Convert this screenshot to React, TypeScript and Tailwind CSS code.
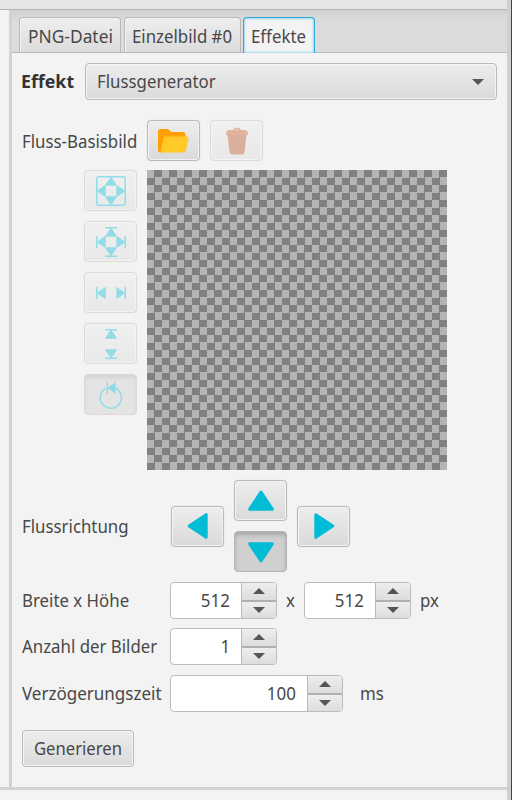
import React from "react";

const raised = "border border-[#b9b9b9] bg-linear-to-b from-[#ededed] to-[#dadada] shadow-[inset_0_0_0_1px_#f4f4f4]";

function Label({ children, className = "", fit = "scale-x-[.935]" }: { children: React.ReactNode; className?: string; fit?: string }) {
  return (
    <span className={`block origin-left whitespace-nowrap text-[18px] leading-6 ${fit} ${className}`}>
      {children}
    </span>
  );
}

function IconButton({ children, pressed, disabled }: { children: React.ReactNode; pressed?: boolean; disabled?: boolean }) {
  const skin = pressed
    ? "border border-[#b4b4b4] bg-[#d0d0d0] shadow-[inset_0_3px_4px_#a8a8a8]"
    : "border border-[#b9b9b9] bg-linear-to-b from-[#ededed] to-[#dadada] shadow-[inset_0_0_0_1px_#f4f4f4,0_0_1px_#c0c0c0]";
  return (
    <button className={`flex h-[41px] w-[53px] shrink-0 items-center justify-center rounded-[4px] ${skin} ${disabled ? "opacity-40" : ""}`}>
      {children}
    </button>
  );
}

const up = "M15 .5L21.3 9.7H8.7Z";
const down = "M15 29.5L21.3 20.3H8.7Z";
const left = "M.5 15L9.7 8.7V21.3Z";
const right = "M29.5 15L20.3 8.7V21.3Z";

function Glyph({ d, lines }: { d: string; lines: string }) {
  return (
    <svg width="30" height="30" viewBox="0 0 30 30">
      <path d={d} fill="#00bcd4" />
      <path d={lines} fill="none" stroke="#00bcd4" strokeWidth="1.5" />
    </svg>
  );
}

function Triangle({ turn }: { turn: string }) {
  return (
    <svg width="28" height="28" viewBox="0 0 28 28" className={turn}>
      <path d="M14 5.2L25.3 22.2H2.7Z" fill="#00bcd4" stroke="#00bcd4" strokeWidth="3" strokeLinejoin="round" />
    </svg>
  );
}

function Spinner({ value, field }: { value: string; field: string }) {
  return (
    <div className="flex h-[37px] shrink-0 overflow-hidden rounded-[4px] border border-[#bcbcbc] bg-white">
      <div className={`flex items-center justify-end pr-[11px] pb-[2px] ${field}`}>
        <span className="block origin-right scale-x-[.94] text-[18px] leading-6">{value}</span>
      </div>
      <div className="flex w-[35px] flex-col border-l border-[#b9b9b9]">
        <div className="flex flex-1 items-center justify-center border-b border-[#b0b0b0] bg-linear-to-b from-[#eeeeee] to-[#dddddd]">
          <svg width="12" height="6"><path d="M6 0L12 6H0Z" fill="#555" /></svg>
        </div>
        <div className="flex flex-1 items-center justify-center border-t border-[#b0b0b0] bg-linear-to-b from-[#eeeeee] to-[#dddddd]">
          <svg width="12" height="6"><path d="M6 6L12 0H0Z" fill="#555" /></svg>
        </div>
      </div>
    </div>
  );
}

function Tab({ children, className, fit }: { children: React.ReactNode; className: string; fit?: string }) {
  return (
    <div className={`shrink-0 rounded-t-[4px] border border-b-0 pt-[6px] ${className}`}>
      <Label fit={fit}>{children}</Label>
    </div>
  );
}

export default function App() {
  return (
    <div className="flex h-[800px] w-[512px] overflow-hidden bg-[#f3f3f3] font-['Noto_Sans','Open_Sans',sans-serif] text-[#484848]">
      <div className="flex w-[507px] flex-col">
        <div className="h-[10px] shrink-0 border-b border-[#b5b5b5] bg-[#e6e6e6]" />
        <div className="flex h-[777px] shrink-0">
          <div className="w-[12px] shrink-0 border-r-[3px] border-[#d2d2d2]" />
          <div className="min-w-0 flex-1">
            <div className="flex h-[43px] items-end border-b border-[#b8b8b8] bg-linear-to-b from-[#cfcfcf] to-[#dcdcdc] to-25% pl-[7px]">
              <Tab fit="scale-x-[.965]" className="mr-[3px] h-[35px] w-[102px] border-[#b9b9b9] bg-linear-to-b from-[#eeeeee] to-[#dcdcdc] pl-2 shadow-[inset_1px_1px_0_#f4f4f4]">PNG-Datei</Tab>
              <Tab className="mr-[2px] h-[35px] w-[117px] border-[#b9b9b9] bg-linear-to-b from-[#eeeeee] to-[#dcdcdc] pl-[7px] shadow-[inset_1px_1px_0_#f4f4f4]">Einzelbild #0</Tab>
              <Tab className="-mb-px h-[36px] w-[72px] border-[#2fadd8] bg-[#f3f3f3] pl-[7px] shadow-[inset_0_0_2px_1px_#9bd8ee]">Effekte</Tab>
            </div>

            <div className="mt-[10px] flex h-[37px] items-center pl-[9px]">
              <div className="w-[64px] pb-[2px]"><Label fit="scale-x-[.99]" className="font-bold text-[#333]">Effekt</Label></div>
              <div className={`flex h-[37px] w-[412px] items-center justify-between rounded-[4px] pr-[12px] pl-[11px] ${raised}`}>
                <Label className="pb-px">Flussgenerator</Label>
                <svg width="12" height="6"><path d="M0 0H12L6 6Z" fill="#555" /></svg>
              </div>
            </div>

            <div className="mt-[20px] flex h-[41px] items-center pl-[10px]">
              <div className="w-[125px]"><Label>Fluss-Basisbild</Label></div>
              <IconButton>
                <svg width="31" height="24" viewBox="0 0 31 24">
                  <path d="M2.5 0H10L13.5 3H25Q27.5 3 27.5 5.5V21L3 23.5Q0 23.5 0 21V2.5Q0 0 2.5 0Z" fill="#ffa000" />
                  <path d="M7.5 7.5H29Q31 7.5 30.5 9.5L28 21.5Q27.5 23.5 25.5 23.5H2.5L5.5 9Q6 7.5 7.5 7.5Z" fill="#ffca28" />
                </svg>
              </IconButton>
              <div className="ml-[10px]">
                <IconButton disabled>
                  <svg width="22" height="28" viewBox="0 0 22 28">
                    <path d="M1.5 8H20.5L18.5 25Q18.1 27.5 15.5 27.5H6.5Q3.9 27.5 3.5 25Z" fill="#b84a1e" />
                    <path d="M0 8Q0 3 3 3H7Q8 .5 11 .5T15 3H19Q22 3 22 8Z" fill="#d05424" />
                    <path d="M9 2.8Q9.500 2 11 2T13 2.800Z" fill="#ededed" />
                  </svg>
                </IconButton>
              </div>
            </div>

            <div className="mt-[9px] flex h-[300px] pl-[72px]">
              <div className="mr-[10px] flex flex-col gap-[10px]">
                <IconButton disabled><Glyph d={up + down + left + right} lines="M2.5 .8H27.5Q29.2 .8 29.2 2.5V27.5Q29.2 29.2 27.5 29.2H2.5Q.8 29.2 .8 27.5V2.5Q.8 .8 2.5 .8Z" /></IconButton>
                <IconButton disabled><Glyph d={up + down + left + right} lines="M9 .8H21M9 29.2H21M.8 9V21M29.2 9V21" /></IconButton>
                <IconButton disabled><Glyph d={left + right} lines="M.8 9V21M29.2 9V21" /></IconButton>
                <IconButton disabled><Glyph d={up + down} lines="M9 .8H21M9 29.2H21" /></IconButton>
                <IconButton disabled pressed><Glyph d="M11.2 8L19.7 2V14Z" lines="M11.3 2V14M19.5 8A10.6 10.6 0 1 1 9.5 8.4" /></IconButton>
              </div>
              <div className="size-[300px] bg-[conic-gradient(#808080_25%,#b4b4b4_0_50%,#808080_0_75%,#b4b4b4_0)] bg-[length:15px_15px]" />
            </div>

            <div className="mt-[10px] flex h-[92px] items-center pl-[10px]">
              <div className="w-[149px]"><Label>Flussrichtung</Label></div>
              <IconButton><Triangle turn="-rotate-90" /></IconButton>
              <div className="mx-[10px] flex flex-col gap-[10px]">
                <IconButton><Triangle turn="rotate-0" /></IconButton>
                <IconButton pressed><Triangle turn="rotate-180" /></IconButton>
              </div>
              <IconButton><Triangle turn="rotate-90" /></IconButton>
            </div>

            <div className="mt-[10px] flex h-[37px] items-center pl-[10px]">
              <div className="w-[148px] pb-px"><Label>Breite x Höhe</Label></div>
              <Spinner value="512" field="w-[70px]" />
              <div className="ml-[9px] w-[18px] pb-px"><Label>x</Label></div>
              <Spinner value="512" field="w-[70px]" />
              <div className="ml-[9px] pb-px"><Label>px</Label></div>
            </div>
            <div className="mt-[9px] flex h-[37px] items-center pl-[10px]">
              <div className="w-[148px] pb-px"><Label>Anzahl der Bilder</Label></div>
              <Spinner value="1" field="w-[70px]" />
            </div>
            <div className="mt-[10px] flex h-[37px] items-center pl-[10px]">
              <div className="w-[148px] pb-[2px]"><Label fit="scale-x-[.945]">Verzögerungszeit</Label></div>
              <Spinner value="100" field="w-[136px]" />
              <div className="ml-[17px] pb-px"><Label>ms</Label></div>
            </div>
            <button className={`mt-[18px] ml-[10px] flex h-[37px] w-[112px] items-center rounded-[4px] pb-px pl-[11px] ${raised}`}>
              <Label fit="scale-x-[.925]">Generieren</Label>
            </button>
          </div>
        </div>
        <div className="h-[3px] shrink-0 bg-[#d2d2d2]" />
      </div>
      <div className="w-[4px] bg-[#d0d0d0]" />
      <div className="w-px bg-[#3c4650]" />
    </div>
  );
}
